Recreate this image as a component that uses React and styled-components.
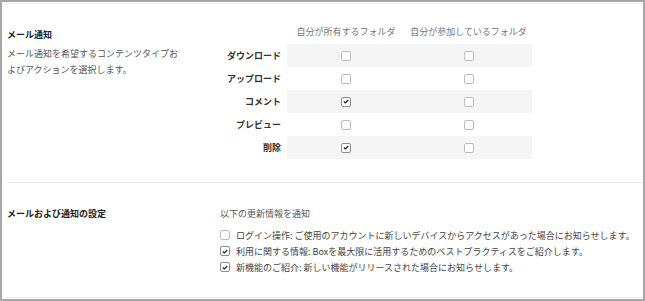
import React from "react";
import styled, { createGlobalStyle } from "styled-components";

const Global = createGlobalStyle`
  html, body { margin: 0; padding: 0; background: #fff; }
  body { font-family: "Noto Sans CJK JP", "Noto Sans", sans-serif; }
`;

const Frame = styled.div`
  box-sizing: border-box;
  width: 645px;
  height: 301px;
  border: 2px solid #a7a7a7;
  background: #fff;
  padding: 1px 0 0 5px;
  display: flex;
  flex-direction: column;
`;

const Section = styled.section`
  display: grid;
  grid-template-columns: 213px 1fr;
  border-top: 1px solid #ececec;
  padding-top: ${(p) => p.$top}px;
  height: ${(p) => p.$height}px;
  box-sizing: border-box;
  ${(p) => (p.$last ? "border-bottom: 1px solid #ececec;" : "")}
`;

const Left = styled.div`
  display: flex;
  flex-direction: column;
  padding-top: ${(p) => p.$top || 0}px;
`;

const Title = styled.div`
  font-size: 9px;
  line-height: 14px;
  font-weight: 700;
  color: #222;
`;

const Desc = styled.div`
  margin-top: 4px;
  font-size: 9px;
  line-height: 16px;
  color: #555;
  width: 176px;
`;

const Table = styled.div`
  display: grid;
  grid-template-columns: 67px 118px 127px;
  grid-template-rows: 18px;
  grid-auto-rows: 23px;
`;

const HeadRow = styled.div`
  display: contents;
`;

const HeadCell = styled.div`
  font-size: 9px;
  line-height: 12px;
  color: #777;
  text-align: center;
  white-space: nowrap;
  height: 12px;
`;

const Row = styled.div`
  display: contents;
`;

const Label = styled.div`
  font-size: 9px;
  font-weight: 700;
  color: #333;
  display: flex;
  align-items: center;
  justify-content: flex-end;
  padding-right: 6px;
`;

const Cell = styled.div`
  display: flex;
  align-items: center;
  justify-content: center;
  background: ${(p) => (p.$shade ? "#f5f5f5" : "#fff")};
`;

const Box = styled.span`
  box-sizing: border-box;
  width: 10px;
  height: 10px;
  border: 1px solid ${(p) => (p.$checked ? "#8d8d8d" : "#bcbcbc")};
  border-radius: 2px;
  background: #fff;
  display: inline-flex;
  align-items: center;
  justify-content: center;
  flex: none;
`;

const Check = ({ checked }) => (
  <Box $checked={checked}>
    {checked && (
      <svg width="6" height="5" viewBox="0 0 6 5">
        <path d="M0.8 2.6 L2.3 3.9 L5.2 1" fill="none" stroke="#222" strokeWidth="1.3" />
      </svg>
    )}
  </Box>
);

const Right = styled.div`
  display: flex;
  flex-direction: column;
`;

const Lead = styled.div`
  font-size: 9px;
  line-height: 14px;
  color: #555;
  margin-bottom: 6px;
`;

const Option = styled.label`
  display: flex;
  align-items: center;
  gap: 6px;
  height: 16px;
  font-size: 9px;
  color: #444;
  white-space: nowrap;
`;

const rows = [
  ["ダウンロード", false, false],
  ["アップロード", false, false],
  ["コメント", true, false],
  ["プレビュー", false, false],
  ["削除", true, false],
];

const options = [
  [false, "ログイン操作: ご使用のアカウントに新しいデバイスからアクセスがあった場合にお知らせします。"],
  [true, "利用に関する情報: Boxを最大限に活用するためのベストプラクティスをご紹介します。"],
  [true, "新機能のご紹介: 新しい機能がリリースされた場合にお知らせします。"],
];

export default function App() {
  return (
    <>
      <Global />
      <Frame>
        <Section $top={22} $height={179}>
          <Left $top={2}>
            <Title>メール通知</Title>
            <Desc>メール通知を希望するコンテンツタイプおよびアクションを選択します。</Desc>
          </Left>
          <div>
            <Table>
              <HeadRow>
                <HeadCell />
                <HeadCell>自分が所有するフォルダ</HeadCell>
                <HeadCell>自分が参加しているフォルダ</HeadCell>
              </HeadRow>
              {rows.map(([name, a, b], i) => (
                <Row key={name}>
                  <Label>{name}</Label>
                  <Cell $shade={i % 2 === 0}>
                    <Check checked={a} />
                  </Cell>
                  <Cell $shade={i % 2 === 0}>
                    <Check checked={b} />
                  </Cell>
                </Row>
              ))}
            </Table>
          </div>
        </Section>
        <Section $top={24} $height={116} $last>
          <Left>
            <Title>メールおよび通知の設定</Title>
          </Left>
          <Right>
            <Lead>以下の更新情報を通知</Lead>
            {options.map(([c, t]) => (
              <Option key={t}>
                <Check checked={c} />
                {t}
              </Option>
            ))}
          </Right>
        </Section>
      </Frame>
    </>
  );
}
